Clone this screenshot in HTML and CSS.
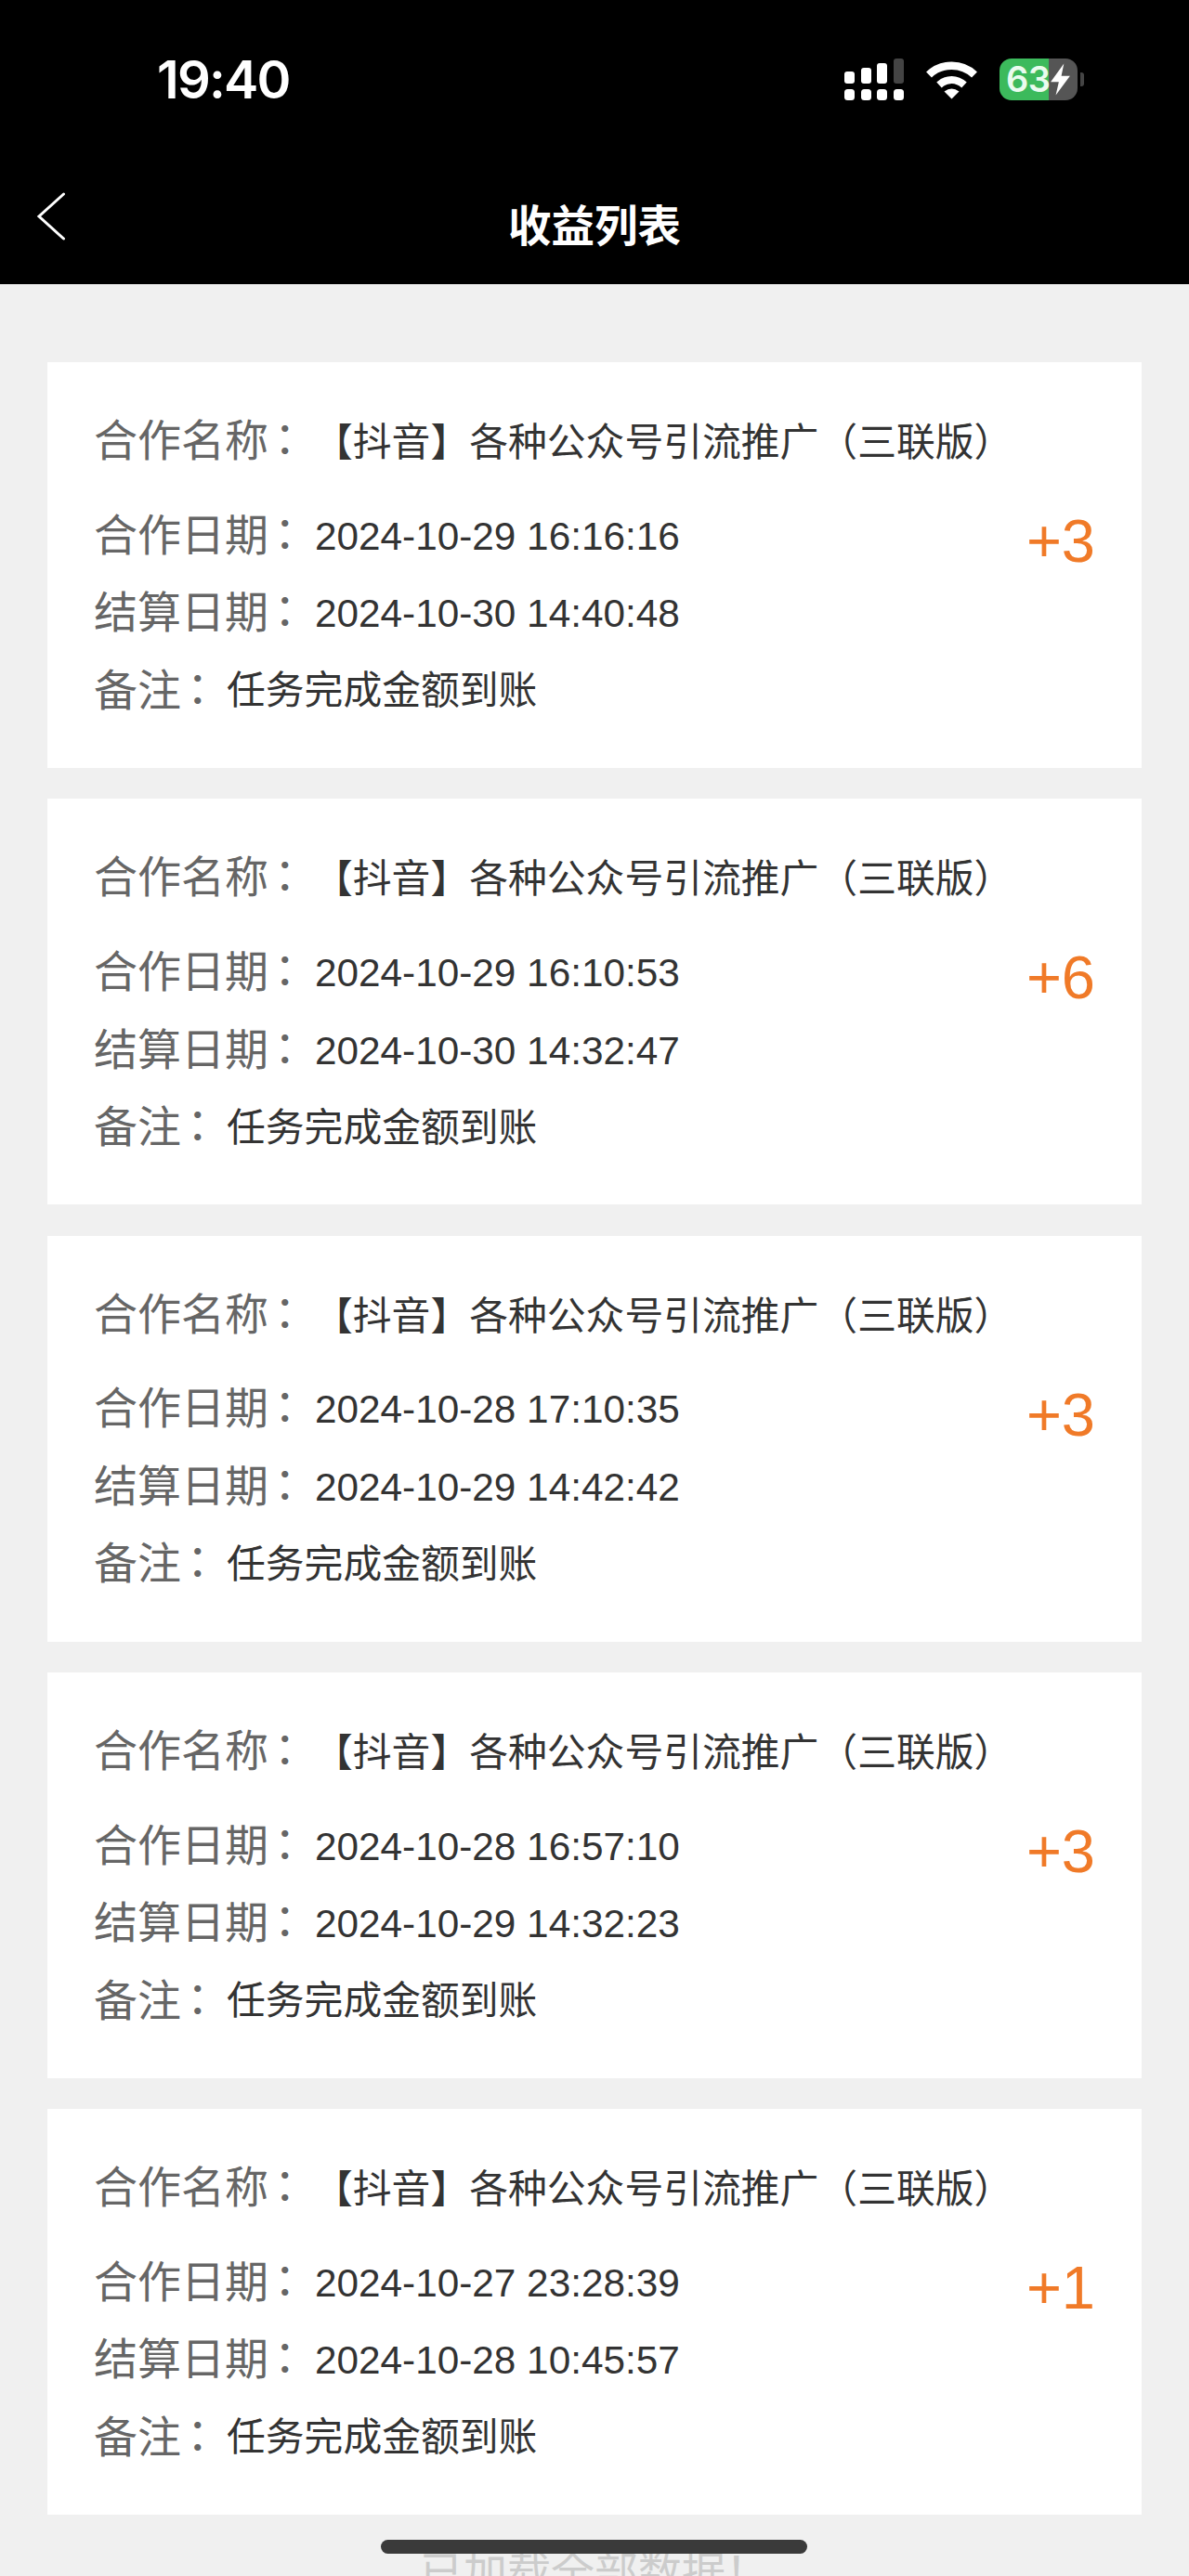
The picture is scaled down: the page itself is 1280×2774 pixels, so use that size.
FILE: index.html
```html
<!DOCTYPE html>
<html lang="zh-CN">
<head>
<meta charset="utf-8">
<title>收益列表</title>
<link rel="stylesheet" href="styles.css">
</head>
<body>
<div class="page">
  <header class="header">
    <div class="status">
      <span class="time">19:40</span>
      <div class="status-icons">
        <svg class="signal" width="64" height="45" viewBox="0 0 64 45">
          <rect x="0" y="14" width="11" height="13" rx="3" fill="#fff"/>
          <rect x="18" y="10" width="11" height="17" rx="3" fill="#fff"/>
          <rect x="35" y="5" width="11" height="22" rx="3" fill="#fff"/>
          <rect x="53" y="0" width="11" height="27" rx="3" fill="#444"/>
          <rect x="0" y="33" width="11" height="12" rx="3.5" fill="#fff"/>
          <rect x="18" y="33" width="11" height="12" rx="3.5" fill="#fff"/>
          <rect x="35" y="33" width="11" height="12" rx="3.5" fill="#fff"/>
          <rect x="53" y="33" width="11" height="12" rx="3.5" fill="#fff"/>
        </svg>
        <svg class="wifi" width="57" height="42" viewBox="0 0 57 42">
          <path d="M4 15.5C17.500 2.500 39.500 2.500 53 15.500" fill="none" stroke="#fff" stroke-width="8.500"/>
          <path d="M15 26.500C23 19 34 19 42 26.500" fill="none" stroke="#fff" stroke-width="8"/>
          <path d="M20.500 33.500Q28.500 27.500 36.500 33.500L28.500 41.500Z" fill="#fff"/>
        </svg>
        <div class="battery-wrap">
          <div class="battery">
            <span class="battery-num">63</span>
            <svg class="bolt" width="23" height="35" viewBox="0 0 21 31"><path d="M14 0L1 18H9L6 31L20 12H11.500Z" fill="#fff"/></svg>
          </div>
          <span class="nub"></span>
        </div>
      </div>
    </div>
    <div class="nav">
      <svg class="back" width="32" height="52" viewBox="0 0 32 52"><path d="M29.500 2L3 26L29.500 50" fill="none" stroke="#fff" stroke-width="3" stroke-linecap="round"/></svg>
      <h1 class="title">收益列表</h1>
    </div>
  </header>

  <main class="list">
    <section class="card">
      <div class="row row-name"><span class="label">合作名称<span class="colon">：</span></span><span class="value name">【抖音】各种公众号引流推广（三联版）</span></div>
      <div class="details">
        <div class="rows">
          <div class="row"><span class="label">合作日期<span class="colon">：</span></span><span class="value date">2024-10-29 16:16:16</span></div>
          <div class="row"><span class="label">结算日期<span class="colon">：</span></span><span class="value date">2024-10-30 14:40:48</span></div>
          <div class="row"><span class="label">备注<span class="colon">：</span></span><span class="value note">任务完成金额到账</span></div>
        </div>
        <div class="amount">+3</div>
      </div>
    </section>
    <section class="card">
      <div class="row row-name"><span class="label">合作名称<span class="colon">：</span></span><span class="value name">【抖音】各种公众号引流推广（三联版）</span></div>
      <div class="details">
        <div class="rows">
          <div class="row"><span class="label">合作日期<span class="colon">：</span></span><span class="value date">2024-10-29 16:10:53</span></div>
          <div class="row"><span class="label">结算日期<span class="colon">：</span></span><span class="value date">2024-10-30 14:32:47</span></div>
          <div class="row"><span class="label">备注<span class="colon">：</span></span><span class="value note">任务完成金额到账</span></div>
        </div>
        <div class="amount">+6</div>
      </div>
    </section>
    <section class="card">
      <div class="row row-name"><span class="label">合作名称<span class="colon">：</span></span><span class="value name">【抖音】各种公众号引流推广（三联版）</span></div>
      <div class="details">
        <div class="rows">
          <div class="row"><span class="label">合作日期<span class="colon">：</span></span><span class="value date">2024-10-28 17:10:35</span></div>
          <div class="row"><span class="label">结算日期<span class="colon">：</span></span><span class="value date">2024-10-29 14:42:42</span></div>
          <div class="row"><span class="label">备注<span class="colon">：</span></span><span class="value note">任务完成金额到账</span></div>
        </div>
        <div class="amount">+3</div>
      </div>
    </section>
    <section class="card">
      <div class="row row-name"><span class="label">合作名称<span class="colon">：</span></span><span class="value name">【抖音】各种公众号引流推广（三联版）</span></div>
      <div class="details">
        <div class="rows">
          <div class="row"><span class="label">合作日期<span class="colon">：</span></span><span class="value date">2024-10-28 16:57:10</span></div>
          <div class="row"><span class="label">结算日期<span class="colon">：</span></span><span class="value date">2024-10-29 14:32:23</span></div>
          <div class="row"><span class="label">备注<span class="colon">：</span></span><span class="value note">任务完成金额到账</span></div>
        </div>
        <div class="amount">+3</div>
      </div>
    </section>
    <section class="card">
      <div class="row row-name"><span class="label">合作名称<span class="colon">：</span></span><span class="value name">【抖音】各种公众号引流推广（三联版）</span></div>
      <div class="details">
        <div class="rows">
          <div class="row"><span class="label">合作日期<span class="colon">：</span></span><span class="value date">2024-10-27 23:28:39</span></div>
          <div class="row"><span class="label">结算日期<span class="colon">：</span></span><span class="value date">2024-10-28 10:45:57</span></div>
          <div class="row"><span class="label">备注<span class="colon">：</span></span><span class="value note">任务完成金额到账</span></div>
        </div>
        <div class="amount">+1</div>
      </div>
    </section>
  </main>
  <div class="end">已加载全部数据！</div>
  <div class="home-indicator"></div>
</div>
</body>
</html>
```
FILE: styles.css
```css
* { box-sizing: border-box; }
html, body { margin: 0; padding: 0; }
body {
  background: #f0f0f0;
  font-family: "Liberation Sans", "Noto Sans CJK SC", sans-serif;
}
.page {
  position: relative;
  width: 1280px;
  height: 2774px;
  overflow: hidden;
  background: #f0f0f0;
}
.header {
  height: 306px;
  background: #000;
  color: #fff;
}
.status {
  height: 173px;
  padding: 63px 113px 0 169px;
  display: flex;
  justify-content: space-between;
  align-items: flex-start;
}
.time {
  font-family: "Inter", "Liberation Sans", sans-serif;
  font-size: 56px;
  font-weight: 600;
  line-height: 46px;
  letter-spacing: -1.800px;
}
.status-icons {
  display: flex;
  align-items: flex-start;
}
.signal { display: block; }
.wifi { display: block; margin-left: 23px; margin-top: 2px; }
.battery-wrap {
  display: flex;
  align-items: center;
  margin-left: 23px;
}
.battery {
  width: 84px;
  height: 45px;
  border-radius: 13px;
  background: linear-gradient(to right, #3cba5c 0 53px, #555 53px);
  display: flex;
  align-items: center;
  padding-left: 7px;
}
.battery-num {
  font-family: "Inter", "Liberation Sans", sans-serif;
  font-size: 38px;
  font-weight: 600;
  line-height: 45px;
  color: #eafbef;
  letter-spacing: -0.500px;
}
.bolt { display: block; flex: none; }
.nub {
  display: block;
  width: 4px;
  height: 15px;
  margin-left: 3px;
  border-radius: 0 3px 3px 0;
  background: #444;
}
.nav {
  position: relative;
  height: 133px;
}
.back { display: block; position: absolute; left: 39px; top: 34px; }
.title {
  margin: 0;
  padding-top: 39px;
  text-align: center;
  font-size: 46.500px;
  line-height: 64px;
  font-weight: 700;
}
.list {
  padding: 84px 51px 0;
  display: flex;
  flex-direction: column;
  gap: 33.250px;
}
.card {
  height: 437px;
  background: #fff;
  padding: 46px 50px 0;
}
.row {
  display: flex;
  align-items: center;
  height: 83.500px;
}
.row-name {
  height: 78px;
  margin-bottom: 21px;
}
.label {
  font-size: 47px;
  color: #666;
  line-height: 60px;
  white-space: nowrap;
}
.colon {
  display: inline-block;
  width: 47px;
  height: 60px;
  padding-left: 6px;
  vertical-align: top;
  line-height: 54px;
}
.value {
  font-size: 42px;
  color: #333;
  line-height: 60px;
  white-space: nowrap;
}
.name { margin-left: 2px; padding-top: 4px; font-size: 41.800px; }
.date { margin-left: 3px; padding-top: 2px; font-size: 42.300px; }
.note { margin-left: 2px; padding-top: 1px; font-size: 41.800px; }
.details {
  display: flex;
  justify-content: space-between;
}
.amount {
  margin-top: 8px;
  margin-right: 0;
  font-family: "Liberation Sans", sans-serif;
  font-size: 65px;
  line-height: 80px;
  color: #f07a28;
}
.end {
  position: absolute;
  left: 0;
  right: 0;
  top: 2741px;
  text-align: center;
  font-size: 47px;
  line-height: 60px;
  color: #ccc;
}
.home-indicator {
  position: absolute;
  left: 410px;
  top: 2735px;
  width: 459px;
  height: 15px;
  border-radius: 8px;
  background: #3a3a3a;
}
```
